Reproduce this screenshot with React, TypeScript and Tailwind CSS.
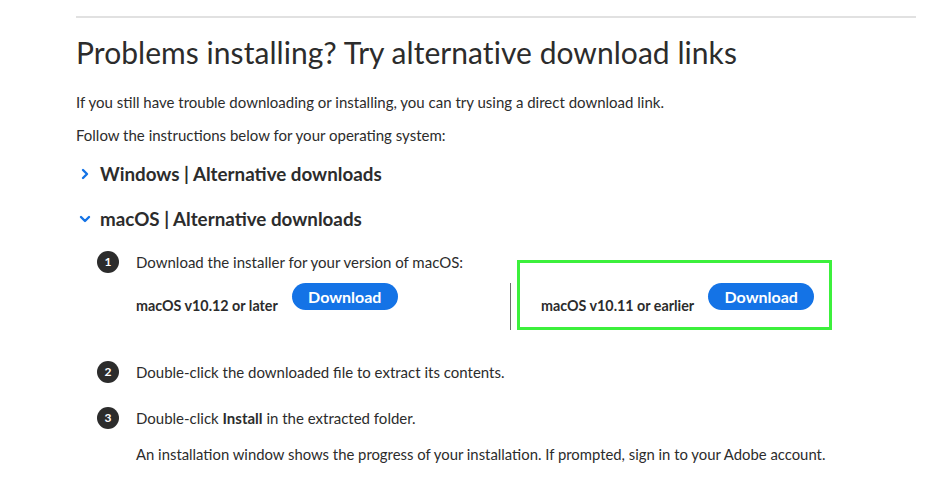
import React from "react";

function Chevron({ open }: { open?: boolean }) {
  return (
    <svg width="12" height="12" viewBox="0 0 12 12" className="shrink-0">
      {open ? (
        <path d="M2 4 L6 8 L10 4" fill="none" stroke="#1473e6" strokeWidth="2.4" strokeLinecap="round" strokeLinejoin="round" />
      ) : (
        <path d="M4 2 L8 6 L4 10" fill="none" stroke="#1473e6" strokeWidth="2.4" strokeLinecap="round" strokeLinejoin="round" />
      )}
    </svg>
  );
}

function StepNum({ n }: { n: number }) {
  return (
    <span className="flex h-[22px] w-[22px] shrink-0 items-center justify-center rounded-full bg-[#2c2c2c] text-[12px] font-bold text-white">
      {n}
    </span>
  );
}

function DownloadBtn() {
  return (
    <button className="h-[27px] w-[106px] shrink-0 rounded-full bg-[#1473e6] text-[16px] font-bold leading-none text-white">
      Download
    </button>
  );
}

export default function App() {
  return (
    <div
      className="h-[490px] w-[928px] overflow-hidden bg-white pl-[76px] pr-[12px] text-[#2c2c2c]"
      style={{ fontFamily: "Lato, 'Open Sans', sans-serif" }}
    >
      <div className="mt-[16px] h-[2px] bg-[#e1e1e1]" />
      <h1 className="mt-[16px] text-[30px] leading-[36px] tracking-[0.05px]">
        Problems installing? Try alternative download links
      </h1>
      <p className="mt-[21px] text-[15px] leading-[22px]">
        If you still have trouble downloading or installing, you can try using a direct download link.
      </p>
      <p className="mt-[11px] text-[15px] leading-[22px]">
        Follow the instructions below for your operating system:
      </p>

      <div className="mt-[15px] flex items-center gap-[9px] pl-[3px]">
        <Chevron />
        <span className="text-[18.8px] font-bold leading-[26px]">Windows | Alternative downloads</span>
      </div>
      <div className="mt-[19px] flex items-center gap-[9px] pl-[3px]">
        <Chevron open />
        <span className="text-[18.8px] font-bold leading-[26px]">macOS | Alternative downloads</span>
      </div>

      <div className="mt-[19px] pl-[21px]">
        <div className="flex items-start">
          <StepNum n={1} />
          <div className="ml-[17px] w-[374px]">
            <p className="text-[15px] leading-[22px]">Download the installer for your version of macOS:</p>
            <div className="mt-[10px] flex items-start gap-[14px]">
              <span className="mt-[12px] text-[14.3px] font-bold leading-[22px]">macOS v10.12 or later</span>
              <DownloadBtn />
            </div>
          </div>
          <div className="mt-[32px] h-[47px] w-px bg-[#6e6e6e]" />
          <div className="ml-[6px] mt-[9px] flex h-[70px] w-[315px] items-start gap-[14px] border-[3px] border-[#3cf03c] pl-[21px] pt-[20px]">
            <span className="mt-[12px] text-[14.3px] font-bold leading-[22px]">macOS v10.11 or earlier</span>
            <DownloadBtn />
          </div>
        </div>

        <div className="mt-[31px] flex items-center gap-[17px]">
          <StepNum n={2} />
          <span className="text-[15px] leading-[22px]">Double-click the downloaded file to extract its contents.</span>
        </div>
        <div className="mt-[24px] flex items-center gap-[17px]">
          <StepNum n={3} />
          <span className="text-[15px] leading-[22px]">
            Double-click <b>Install</b> in the extracted folder.
          </span>
        </div>
        <p className="mt-[14px] pl-[39px] text-[14.85px] leading-[22px]">
          An installation window shows the progress of your installation. If prompted, sign in to your Adobe account.
        </p>
      </div>
    </div>
  );
}
